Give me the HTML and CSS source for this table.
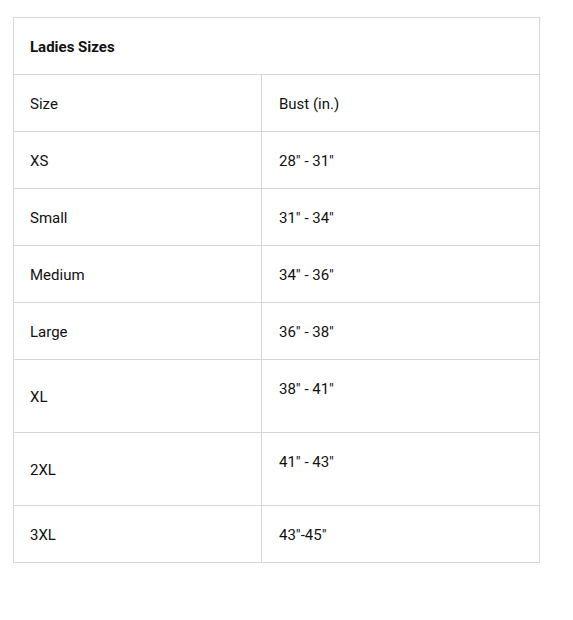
FILE: index.html
```html
<!DOCTYPE html>
<html>
<head>
<meta charset="utf-8">
<link rel="stylesheet" href="styles.css">
</head>
<body>
<div class="wrap">
<table class="sizes">
  <tr><th colspan="2" class="title">Ladies Sizes</th></tr>
  <tr><td class="c1">Size</td><td class="c2">Bust (in.)</td></tr>
  <tr><td class="c1">XS</td><td class="c2">28" - 31"</td></tr>
  <tr><td class="c1">Small</td><td class="c2">31" - 34"</td></tr>
  <tr><td class="c1">Medium</td><td class="c2">34" - 36"</td></tr>
  <tr><td class="c1">Large</td><td class="c2">36" - 38"</td></tr>
  <tr><td class="c1">XL</td><td class="c2">38" - 41"<br>&nbsp;</td></tr>
  <tr><td class="c1">2XL</td><td class="c2">41" - 43"<br>&nbsp;</td></tr>
  <tr><td class="c1">3XL</td><td class="c2">43"-45"</td></tr>
</table>
</div>
</body>
</html>
```
FILE: styles.css
```css
html, body { margin: 0; padding: 0; background: #fff; }
.wrap { padding: 17px 0 0 13px; }
.sizes {
  border-collapse: collapse;
  width: 527px;
  font-family: Roboto, "Liberation Sans", sans-serif;
  font-size: 15px;
  line-height: 16px;
  color: #111;
}
.sizes th, .sizes td {
  border: 1px solid #d6d6d6;
  padding: 21px 16px 19px 16px;
  text-align: left;
  vertical-align: middle;
}
.sizes .title { font-weight: 700; }
.sizes .c1 { width: 215px; }
.sizes .c2 { padding-left: 17px; }
```
